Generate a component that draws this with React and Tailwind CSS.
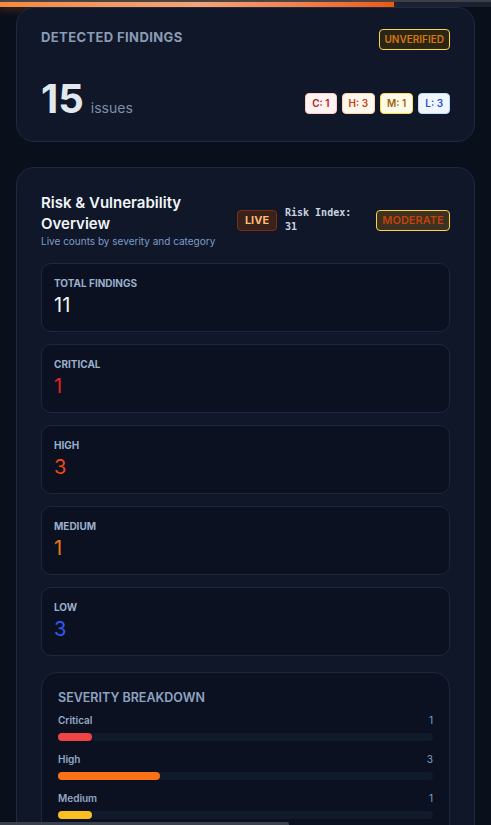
const severityCounts = [
  { key: "C", value: 1, cls: "bg-[#fef2f2] border-[#fecaca] text-[#b42318]" },
  { key: "H", value: 3, cls: "bg-[#fff7ed] border-[#fed7aa] text-[#c2410c]" },
  { key: "M", value: 1, cls: "bg-[#fefce8] border-[#fde047] text-[#a16207]" },
  { key: "L", value: 3, cls: "bg-[#eff6ff] border-[#bfdbfe] text-[#1d4ed8]" },
];

const stats = [
  { label: "Total Findings", value: 11, color: "text-[#f1f5f9]" },
  { label: "Critical", value: 1, color: "text-[#e02424]" },
  { label: "High", value: 3, color: "text-[#ea4a16]" },
  { label: "Medium", value: 1, color: "text-[#ea7a10]" },
  { label: "Low", value: 3, color: "text-[#2f5cf5]" },
];

const breakdown = [
  { label: "Critical", value: 1, bar: "bg-[#ef4444]" },
  { label: "High", value: 3, bar: "bg-[#f97316]" },
  { label: "Medium", value: 1, bar: "bg-[#fbbf24]" },
  { label: "Low", value: 3, bar: "bg-[#3b82f6]" },
];

const total = 11;

function App() {
  return (
    <div className="min-h-screen bg-[#0a0f1c] font-['Inter','Noto_Sans',sans-serif]">
      {/* page progress */}
      <div className="h-[2px] bg-[#3c4048]" />
      <div className="h-[5px] bg-[#1b2130]">
        <div className="h-full w-[394px] bg-gradient-to-r from-[#f28a40] via-[#f4a477] to-[#ea5a0c] shadow-[0_2px_8px_rgba(249,115,22,0.35)]" />
      </div>

      <div className="px-4 pb-10">
        <section className="rounded-[18px] border border-[#1e2a44] bg-[#0f1729] px-6 pt-[21px] pb-[22px]">
          <div className="flex items-start justify-between">
            <h3 className="text-[13px] font-bold uppercase leading-4 tracking-[0.03em] text-[#8b9bb4]">
              Detected Findings
            </h3>
            <span className="flex h-[21px] items-center rounded-[4px] border border-[#fcd34d] bg-[#2b2518] px-[5px] text-[10px] font-semibold text-[#d97706]">
              UNVERIFIED
            </span>
          </div>

          <div className="mt-[29px] flex items-end justify-between">
            <div className="flex items-baseline gap-[7px]">
              <span className="text-[40px] font-bold leading-none text-[#e2e8f0]">15</span>
              <span className="text-[14px] text-[#7f8ea6]">issues</span>
            </div>
            <div className="mb-[5px] flex gap-[5px]">
              {severityCounts.map((s) => (
                <span
                  key={s.key}
                  className={`flex h-[21px] items-center rounded-[4px] border px-[6px] text-[10px] font-semibold ${s.cls}`}
                >
                  {s.key}: {s.value}
                </span>
              ))}
            </div>
          </div>
        </section>

        <section className="mt-[25px] rounded-[18px] border border-[#1e2a44] bg-[#0f1729] px-6 pt-6 pb-6">
          <div className="mb-[15px] flex items-center gap-2">
            <div className="min-w-0 flex-1">
              <h2 className="text-[15px] font-semibold leading-[21px] text-[#f1f5f9]">
                Risk &amp; Vulnerability Overview
              </h2>
              <p className="text-[10px] leading-[14px] text-[#7e9cc6]">Live counts by severity and category</p>
            </div>
            <div className="flex shrink-0 items-center">
              <span className="flex h-[21px] w-[40px] items-center justify-center rounded-[4px] border border-[#7c2d12] bg-[#3a2119] text-[11px] font-bold text-[#fdba74]">
                LIVE
              </span>
              <span className="ml-2 w-[83px] font-['DejaVu_Sans_Mono',monospace] text-[10px] font-bold leading-[14px] text-[#cbd5e1]">
                Risk Index: 31
              </span>
              <span className="ml-2 flex h-[21px] w-[74px] items-center justify-center rounded-[4px] border border-[#fcd34d] bg-[#3d3120] text-[11px] font-semibold text-[#c2410c]">
                MODERATE
              </span>
            </div>
          </div>

          <div className="flex flex-col gap-3">
            {stats.map((s) => (
              <div key={s.label} className="rounded-[10px] border border-[#1c2740] bg-[#0b1120] p-3">
                <p className="text-[10px] font-bold uppercase leading-[15px] text-[#9ab0cc]">{s.label}</p>
                <p className={`text-xl leading-7 ${s.color}`}>{s.value}</p>
              </div>
            ))}
          </div>

          <div className="mt-4 rounded-2xl border border-[#1c2740] bg-[#0b1120] p-4">
            <h4 className="mb-[5px] text-[12.5px] font-semibold uppercase leading-[18px] text-[#8ea3c0]">
              Severity Breakdown
            </h4>
            <div className="flex flex-col gap-[10px]">
              {breakdown.map((b) => (
                <div key={b.label}>
                  <div className="mb-[5px] flex justify-between text-[10px] leading-4">
                    <span className="font-semibold text-[#94a8c4]">{b.label}</span>
                    <span className="text-[#8aa0c0]">{b.value}</span>
                  </div>
                  <div className="h-2 rounded-full bg-[#111a2b]">
                    <div className={`h-full rounded-full ${b.bar}`} style={{ width: `${(b.value / total) * 100}%` }} />
                  </div>
                </div>
              ))}
            </div>
          </div>
        </section>
      </div>

      <div className="fixed bottom-0 left-0 h-[3px] w-[289px] rounded-tr-[2px] bg-[#3a414d]" />
    </div>
  );
}

export default App;
